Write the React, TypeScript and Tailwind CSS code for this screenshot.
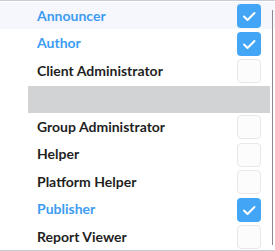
const roles = [
  { name: 'Announcer', checked: true, hover: true },
  { name: 'Author', checked: true },
  { name: 'Client Administrator', checked: false },
  { name: '', divider: true },
  { name: 'Group Administrator', checked: false },
  { name: 'Helper', checked: false },
  { name: 'Platform Helper', checked: false },
  { name: 'Publisher', checked: true },
  { name: 'Report Viewer', checked: false },
]

function Check({ on }: { on: boolean }) {
  if (!on) {
    return <div className="mt-[2px] h-[24px] w-[24px] shrink-0 rounded-[4px] border border-[#e9e7e9] bg-[#fdfcfd]" />
  }
  return (
    <div className="mt-[2px] flex h-[24px] w-[24px] shrink-0 items-center justify-center rounded-[4px] bg-[#42a5f5]">
      <svg viewBox="0 0 24 24" className="h-[24px] w-[24px]" fill="none" stroke="white" strokeWidth="2" strokeLinecap="round" strokeLinejoin="round">
        <path d="M7 12.5l3.5 3.5 7-7" />
      </svg>
    </div>
  )
}

export default function App() {
  return (
    <div
      className="relative h-[251px] w-[275px] overflow-hidden border-t border-b border-[#c9ccd6] bg-white"
      style={{ fontFamily: 'Lato, "Open Sans", sans-serif' }}
    >
      <ul className="pt-[0.5px]">
        {roles.map((r, i) =>
          r.divider ? (
            <li key={i} className="ml-[28px] mr-[5px] mt-[1.5px] h-[27px] bg-[#d2d3d5]" />
          ) : (
            <li
              key={i}
              className={`flex h-[27.5px] items-center justify-between pl-[37px] pr-[14px] ${r.hover ? 'bg-[#f5f7fc]' : ''}`}
            >
              <span className={`text-[14px] font-bold ${r.checked ? 'text-[#3d9cf2]' : 'text-[#1f1f1f]'}`}>
                {r.name}
              </span>
              <Check on={!!r.checked} />
            </li>
          )
        )}
      </ul>
      {/* scrollbar */}
      <div className="absolute right-[2px] top-[9px] h-[235px] w-[1.5px] bg-[#8c8c8c]" />
    </div>
  )
}
